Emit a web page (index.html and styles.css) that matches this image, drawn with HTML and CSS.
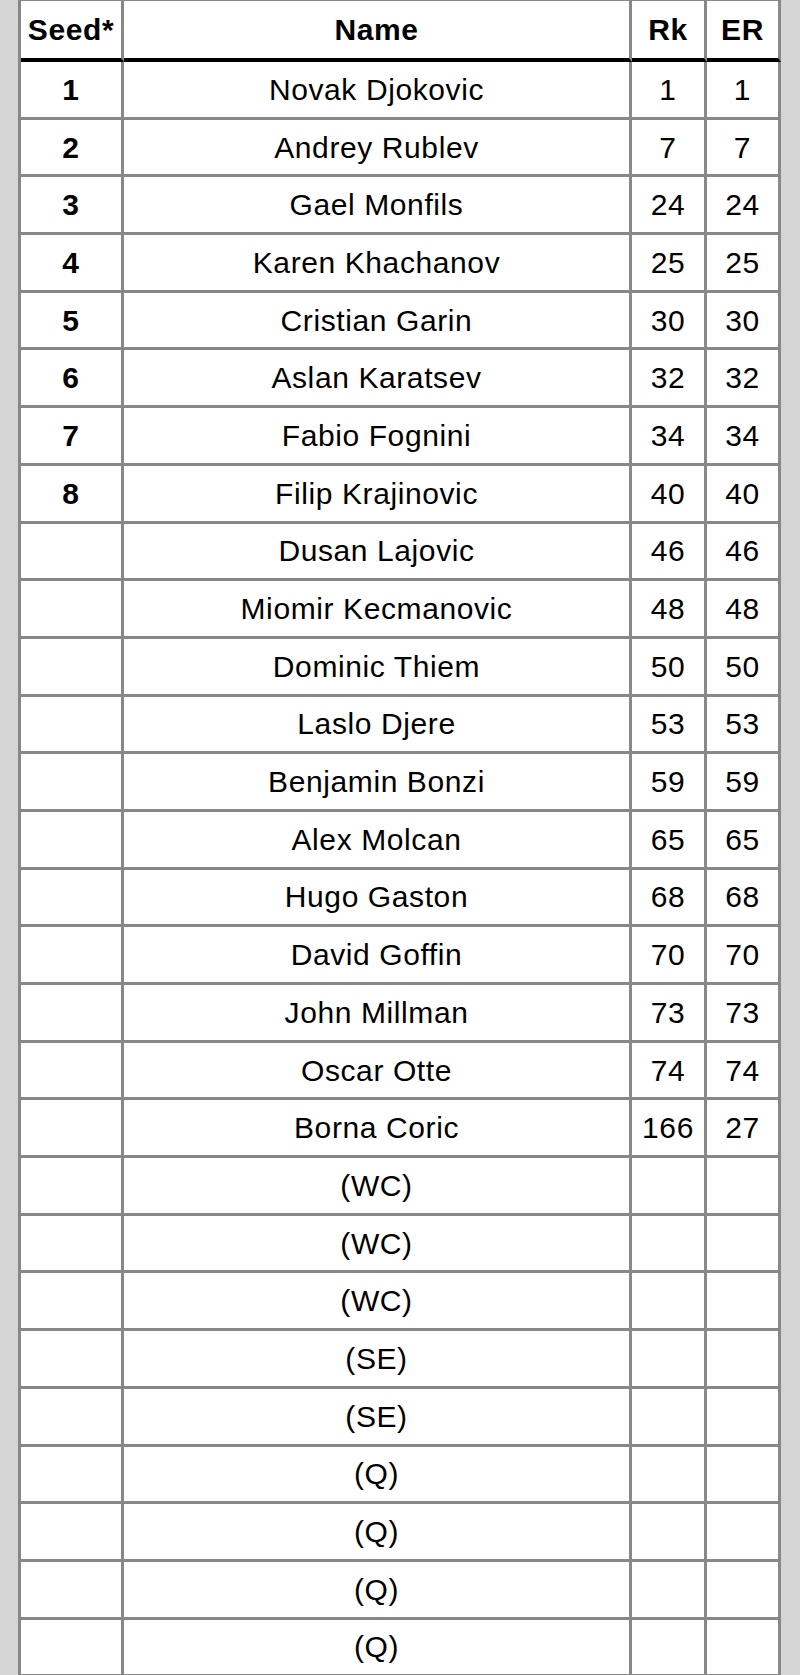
FILE: index.html
```html
<!DOCTYPE html>
<html lang="en">
<head>
<meta charset="utf-8">
<title>Seeds</title>
<link rel="stylesheet" href="styles.css">
</head>
<body>
<table class="seeds">
  <colgroup>
    <col class="c-seed">
    <col class="c-name">
    <col class="c-rk">
    <col class="c-er">
  </colgroup>
  <thead>
    <tr class="head">
      <th>Seed*</th><th>Name</th><th>Rk</th><th>ER</th>
    </tr>
  </thead>
  <tbody>
    <tr><td class="seed">1</td><td>Novak Djokovic</td><td>1</td><td>1</td></tr>
    <tr><td class="seed">2</td><td>Andrey Rublev</td><td>7</td><td>7</td></tr>
    <tr><td class="seed">3</td><td>Gael Monfils</td><td>24</td><td>24</td></tr>
    <tr><td class="seed">4</td><td>Karen Khachanov</td><td>25</td><td>25</td></tr>
    <tr><td class="seed">5</td><td>Cristian Garin</td><td>30</td><td>30</td></tr>
    <tr><td class="seed">6</td><td>Aslan Karatsev</td><td>32</td><td>32</td></tr>
    <tr><td class="seed">7</td><td>Fabio Fognini</td><td>34</td><td>34</td></tr>
    <tr><td class="seed">8</td><td>Filip Krajinovic</td><td>40</td><td>40</td></tr>
    <tr><td class="seed"></td><td>Dusan Lajovic</td><td>46</td><td>46</td></tr>
    <tr><td class="seed"></td><td>Miomir Kecmanovic</td><td>48</td><td>48</td></tr>
    <tr><td class="seed"></td><td>Dominic Thiem</td><td>50</td><td>50</td></tr>
    <tr><td class="seed"></td><td>Laslo Djere</td><td>53</td><td>53</td></tr>
    <tr><td class="seed"></td><td>Benjamin Bonzi</td><td>59</td><td>59</td></tr>
    <tr><td class="seed"></td><td>Alex Molcan</td><td>65</td><td>65</td></tr>
    <tr><td class="seed"></td><td>Hugo Gaston</td><td>68</td><td>68</td></tr>
    <tr><td class="seed"></td><td>David Goffin</td><td>70</td><td>70</td></tr>
    <tr><td class="seed"></td><td>John Millman</td><td>73</td><td>73</td></tr>
    <tr><td class="seed"></td><td>Oscar Otte</td><td>74</td><td>74</td></tr>
    <tr><td class="seed"></td><td>Borna Coric</td><td>166</td><td>27</td></tr>
    <tr><td class="seed"></td><td>(WC)</td><td></td><td></td></tr>
    <tr><td class="seed"></td><td>(WC)</td><td></td><td></td></tr>
    <tr><td class="seed"></td><td>(WC)</td><td></td><td></td></tr>
    <tr><td class="seed"></td><td>(SE)</td><td></td><td></td></tr>
    <tr><td class="seed"></td><td>(SE)</td><td></td><td></td></tr>
    <tr><td class="seed"></td><td>(Q)</td><td></td><td></td></tr>
    <tr><td class="seed"></td><td>(Q)</td><td></td><td></td></tr>
    <tr><td class="seed"></td><td>(Q)</td><td></td><td></td></tr>
    <tr><td class="seed"></td><td>(Q)</td><td></td><td></td></tr>
  </tbody>
</table>
</body>
</html>
```

FILE: styles.css
```css
html, body {
  margin: 0;
  padding: 0;
  background: #d5d5d5;
}

.seeds {
  margin: 0 0 0 18px;
  width: 763px;
  table-layout: fixed;
  border-collapse: separate;
  border-spacing: 0;
  border-left: 3px solid #888;
  background: #fff;
  font-family: "Liberation Sans", Arial, Helvetica, sans-serif;
  font-size: 30px;
  letter-spacing: 0.6px;
  color: #000;
}

.c-seed { width: 103px; }
.c-name { width: 508px; }
.c-rk { width: 75px; }
.c-er { width: 74px; }

.seeds th,
.seeds td {
  padding: 1px 0 0;
  text-align: center;
  vertical-align: middle;
  border-right: 3px solid #888;
  white-space: nowrap;
}

.seeds th {
  font-weight: bold;
  border-top: 1px solid #888;
  border-bottom: 4px solid #000;
}

.seeds td {
  font-weight: normal;
  border-bottom: 3px solid #888;
}

.seeds td.seed {
  font-weight: bold;
}

.head {
  height: 62px;
}

.seeds tbody tr {
  height: 57.7px;
}
```
